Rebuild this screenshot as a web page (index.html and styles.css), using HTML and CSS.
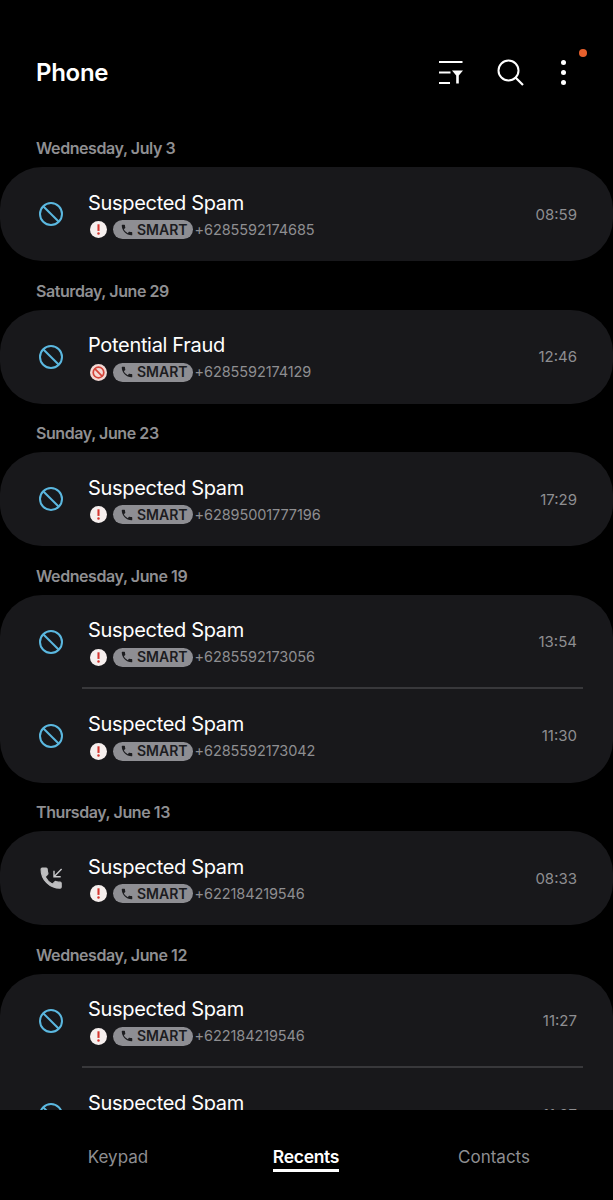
FILE: index.html
```html
<!DOCTYPE html>
<html lang="en">
<head>
    <meta charset="UTF-8">
    <meta name="viewport" content="width=device-width, initial-scale=1.0">
    <title>Phone</title>
    <link rel="stylesheet" href="styles.css">
</head>
<body>
    <svg class="defs" width="0" height="0">
        <symbol id="blocked" viewBox="0 0 26 26">
            <circle cx="13" cy="13" r="11" fill="none" stroke="#5bb8e0" stroke-width="2"/>
            <path d="M5.2 5.2 20.8 20.8" stroke="#5bb8e0" stroke-width="2"/>
        </symbol>
        <symbol id="handset" viewBox="0 0 24 24">
            <path d="M6.6 10.8c1.4 2.8 3.8 5.1 6.6 6.6l2.2-2.2c.3-.3.7-.4 1-.2 1.100.4 2.300.6 3.600.6.600 0 1 .4 1 1V20c0 .6-.4 1-1 1C10.600 21 3 13.400 3 4c0-.6.4-1 1-1h3.500c.6 0 1 .4 1 1 0 1.300.2 2.500.6 3.600.1.300 0 .7-.2 1z"/>
        </symbol>
        <symbol id="warn" viewBox="0 0 18 18">
            <circle cx="9" cy="9" r="9" fill="#f6efee"/>
            <path d="M9 3.500v7" stroke="#d4352f" stroke-width="2.200"/>
            <circle cx="9" cy="13.300" r="1.300" fill="#d4352f"/>
        </symbol>
        <symbol id="fraud" viewBox="0 0 18 18">
            <circle cx="9" cy="9" r="9" fill="#f3d9d4"/>
            <circle cx="9" cy="9" r="5.600" fill="none" stroke="#d4453a" stroke-width="1.800"/>
            <path d="M5 5 13 13" stroke="#d4453a" stroke-width="1.800"/>
        </symbol>
    </svg>

    <header class="topbar">
        <h1>Phone</h1>
        <div class="actions">
            <svg class="icon-filter" viewBox="0 0 24 23" width="24" height="23">
                <path d="M0 1h23.500M0 11.500h11.500M0 22h11" stroke="#fff" stroke-width="2" fill="none"/>
                <path d="M13 9.500h11l-4.200 5v8h-2.600v-8z" fill="#fff"/>
            </svg>
            <svg class="icon-search" viewBox="0 0 27 27" width="27" height="27">
                <circle cx="11.500" cy="11.500" r="10" fill="none" stroke="#fff" stroke-width="2"/>
                <path d="M18.500 18.500 26 26" stroke="#fff" stroke-width="2.200"/>
            </svg>
            <div class="more">
                <i></i><i></i><i></i>
                <span class="badge"></span>
            </div>
        </div>
    </header>

    <main class="list">
        <h2>Wednesday, July 3</h2>
        <section class="card">
            <div class="row">
                <svg class="type"><use href="#blocked"/></svg>
                <div class="info">
                    <div class="name">Suspected Spam</div>
                    <div class="meta"><svg class="flag"><use href="#warn"/></svg><span class="sim"><svg><use href="#handset"/></svg>SMART</span><span>+6285592174685</span></div>
                </div>
                <time>08:59</time>
            </div>
        </section>

        <h2>Saturday, June 29</h2>
        <section class="card">
            <div class="row">
                <svg class="type"><use href="#blocked"/></svg>
                <div class="info">
                    <div class="name">Potential Fraud</div>
                    <div class="meta"><svg class="flag"><use href="#fraud"/></svg><span class="sim"><svg><use href="#handset"/></svg>SMART</span><span>+6285592174129</span></div>
                </div>
                <time>12:46</time>
            </div>
        </section>

        <h2>Sunday, June 23</h2>
        <section class="card">
            <div class="row">
                <svg class="type"><use href="#blocked"/></svg>
                <div class="info">
                    <div class="name">Suspected Spam</div>
                    <div class="meta"><svg class="flag"><use href="#warn"/></svg><span class="sim"><svg><use href="#handset"/></svg>SMART</span><span>+62895001777196</span></div>
                </div>
                <time>17:29</time>
            </div>
        </section>

        <h2>Wednesday, June 19</h2>
        <section class="card">
            <div class="row">
                <svg class="type"><use href="#blocked"/></svg>
                <div class="info">
                    <div class="name">Suspected Spam</div>
                    <div class="meta"><svg class="flag"><use href="#warn"/></svg><span class="sim"><svg><use href="#handset"/></svg>SMART</span><span>+6285592173056</span></div>
                </div>
                <time>13:54</time>
            </div>
            <div class="row">
                <svg class="type"><use href="#blocked"/></svg>
                <div class="info">
                    <div class="name">Suspected Spam</div>
                    <div class="meta"><svg class="flag"><use href="#warn"/></svg><span class="sim"><svg><use href="#handset"/></svg>SMART</span><span>+6285592173042</span></div>
                </div>
                <time>11:30</time>
            </div>
        </section>

        <h2>Thursday, June 13</h2>
        <section class="card">
            <div class="row">
                <svg class="type" viewBox="0 0 26 26">
                    <path transform="translate(-.3 -.3) scale(1.120)" d="M6.600 10.800c1.400 2.800 3.800 5.100 6.600 6.600l2.200-2.200c.3-.3.7-.4 1-.2 1.100.4 2.300.6 3.600.6.600 0 1 .4 1 1V20c0 .6-.4 1-1 1C10.600 21 3 13.400 3 4c0-.6.4-1 1-1h3.500c.6 0 1 .4 1 1 0 1.300.2 2.500.6 3.600.1.300 0 .7-.2 1z" fill="#bdbdbf" stroke="#bdbdbf" stroke-width="1" stroke-linejoin="round"/>
                    <path d="M23.600 4 16 11.700M16 5.700v6h6.700" stroke="#c9c9cb" stroke-width="1.400" fill="none"/>
                </svg>
                <div class="info">
                    <div class="name">Suspected Spam</div>
                    <div class="meta"><svg class="flag"><use href="#warn"/></svg><span class="sim"><svg><use href="#handset"/></svg>SMART</span><span>+622184219546</span></div>
                </div>
                <time>08:33</time>
            </div>
        </section>

        <h2>Wednesday, June 12</h2>
        <section class="card">
            <div class="row">
                <svg class="type"><use href="#blocked"/></svg>
                <div class="info">
                    <div class="name">Suspected Spam</div>
                    <div class="meta"><svg class="flag"><use href="#warn"/></svg><span class="sim"><svg><use href="#handset"/></svg>SMART</span><span>+622184219546</span></div>
                </div>
                <time>11:27</time>
            </div>
            <div class="row">
                <svg class="type"><use href="#blocked"/></svg>
                <div class="info">
                    <div class="name">Suspected Spam</div>
                    <div class="meta"><svg class="flag"><use href="#warn"/></svg><span class="sim"><svg><use href="#handset"/></svg>SMART</span><span>+622184219546</span></div>
                </div>
                <time>11:27</time>
            </div>
        </section>
    </main>

    <nav class="tabs">
        <a>Keypad</a>
        <a class="active">Recents</a>
        <a>Contacts</a>
    </nav>
</body>
</html>
```

FILE: styles.css
```css
* {
    box-sizing: border-box;
}
html, body {
    margin: 0;
    height: 1200px;
    overflow: hidden;
}
body {
    font-family: Inter, "Liberation Sans", sans-serif;
    background-color: #000;
    color: #fff;
}
.defs {
    display: block;
    height: 0;
}
.topbar {
    display: flex;
    justify-content: space-between;
    align-items: center;
    height: 118.5px;
    padding: 26px 46px 0 36px;
}
.topbar h1 {
    margin: 0;
    font-size: 24px;
    font-weight: 600;
    letter-spacing: -0.3px;
}
.actions {
    display: flex;
    align-items: center;
    gap: 34px;
}
.more {
    position: relative;
    display: flex;
    flex-direction: column;
    gap: 5px;
    width: 6px;
    margin-left: 3px;
}
.more i {
    display: block;
    width: 5px;
    height: 5px;
    border-radius: 50%;
    background-color: #fff;
}
.badge {
    position: absolute;
    top: -11px;
    left: 18px;
    width: 8px;
    height: 8px;
    border-radius: 50%;
    background-color: #e8602c;
}
.list {
    height: 991.5px;
    overflow: hidden;
}
.list h2 {
    margin: 0;
    padding: 19.5px 36px 9px;
    font-size: 16px;
    line-height: 20px;
    font-weight: 600;
    letter-spacing: -0.42px;
    color: #8f8f92;
}
.card {
    background-color: #18181b;
    border-radius: 42px;
}
.row {
    position: relative;
    display: flex;
    align-items: center;
    height: 94px;
    padding: 0 36px 0 38px;
}
.row + .row::before {
    content: "";
    position: absolute;
    top: -2px;
    left: 82px;
    right: 30px;
    height: 2px;
    background-color: #38383b;
}
.type {
    width: 26px;
    height: 26px;
    flex: none;
}
.info {
    flex: 1;
    margin-left: 24px;
    padding-top: 1px;
}
.name {
    font-size: 20px;
    line-height: 26px;
    letter-spacing: -0.32px;
}
.meta {
    display: flex;
    align-items: center;
    gap: 5px;
    margin-top: 4px;
    font-size: 14.5px;
    line-height: 20px;
    letter-spacing: -0.1px;
    color: #8e8e91;
}
.flag {
    width: 17px;
    height: 17px;
    margin: 0 1px 0 2px;
}
.sim {
    display: flex;
    align-items: center;
    gap: 3px;
    height: 19px;
    padding: 0 5px 0 7px;
    margin-right: -3px;
    border-radius: 10px;
    background-color: #8e8e93;
    color: #1c1c1f;
    font-size: 14px;
    font-weight: 600;
    letter-spacing: 0;
}
.sim svg {
    width: 14px;
    height: 14px;
    fill: #1c1c1f;
}
time {
    font-size: 15px;
    color: #8e8e91;
}
.tabs {
    display: grid;
    grid-template-columns: repeat(3, 188px);
    justify-items: center;
    padding: 37px 25px 0 24px;
    font-size: 17px;
    color: #8e8e91;
}
.tabs a {
    height: 25px;
    line-height: 20px;
}
.tabs .active {
    color: #fff;
    font-size: 17.5px;
    font-weight: 600;
    letter-spacing: -0.3px;
    border-bottom: 3px solid #fff;
}
```
